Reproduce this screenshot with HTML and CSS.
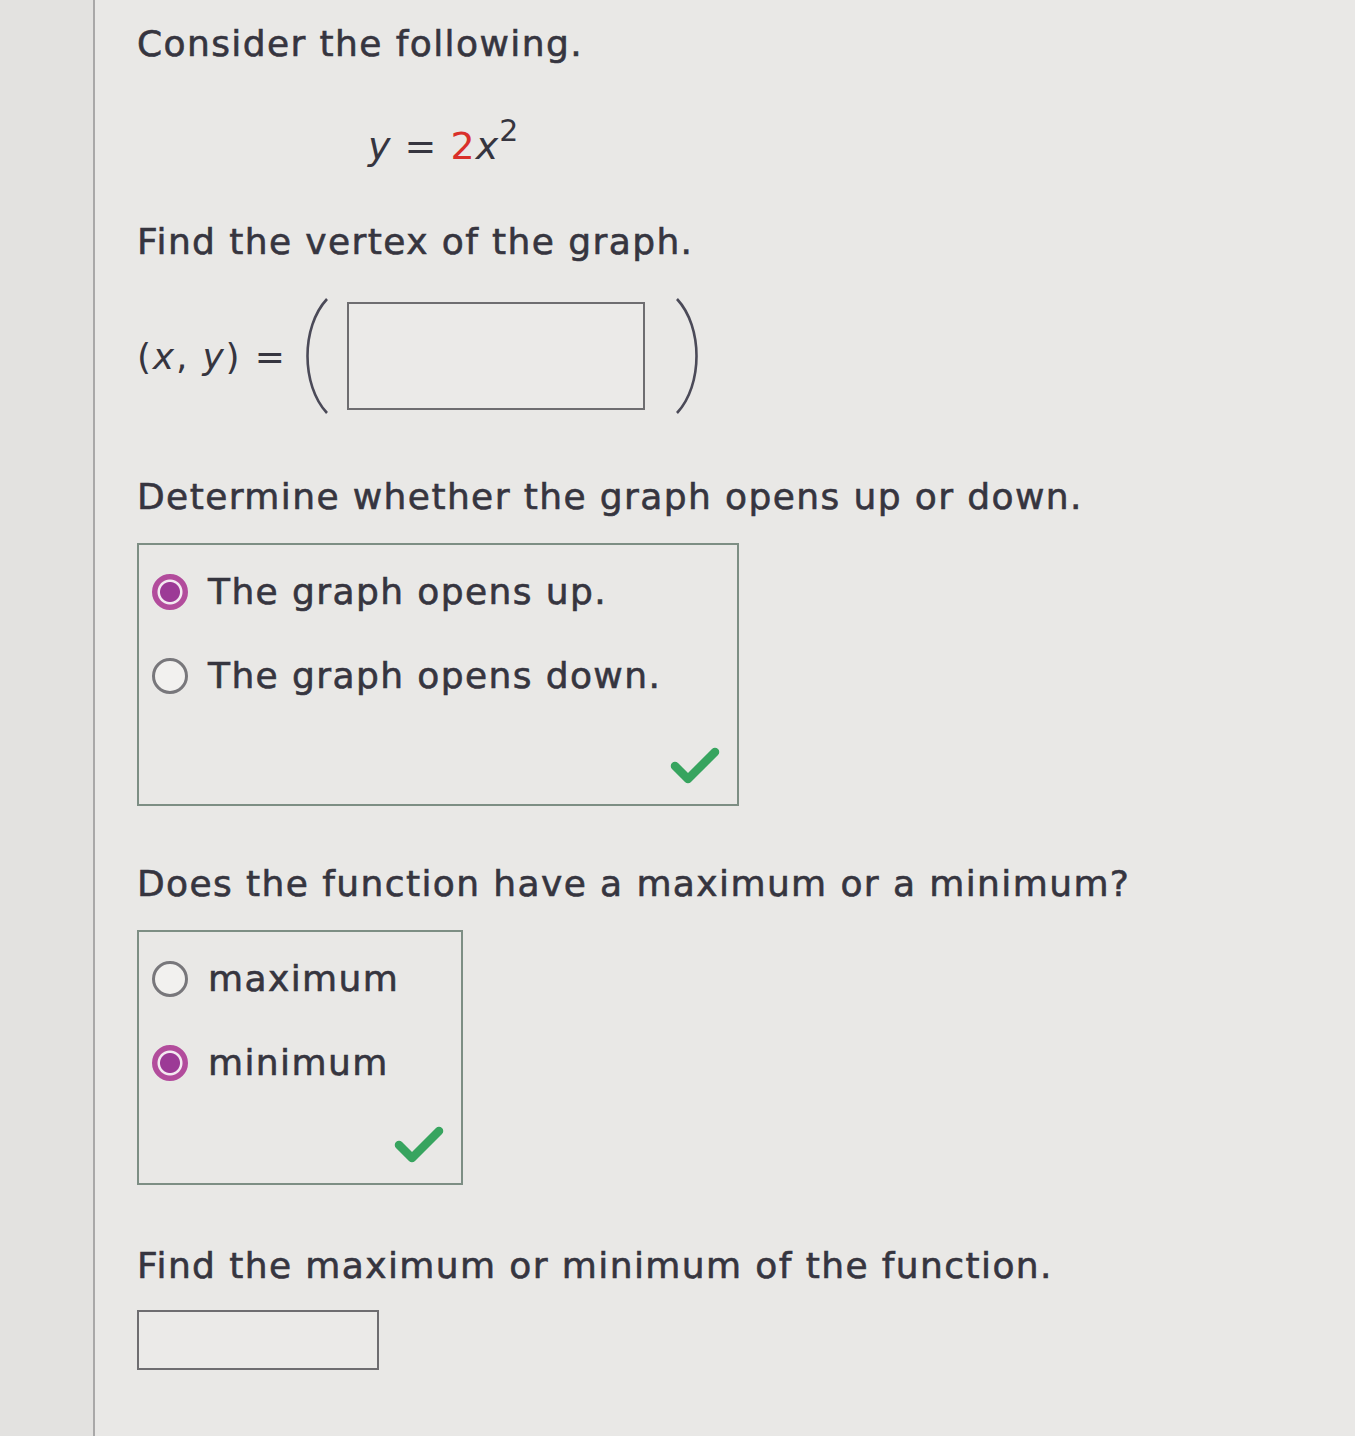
FILE: index.html
```html
<!DOCTYPE html>
<html>
<head>
<meta charset="utf-8">
<link rel="stylesheet" href="styles.css">
</head>
<body>
<div class="page">
  <div class="sidebar"></div>
  <div class="content">
    <p class="q q1">Consider the following.</p>
    <div class="eq"><span class="it">y</span> = <span class="red">2</span><span class="it">x</span><sup>2</sup></div>
    <p class="q q2">Find the vertex of the graph.</p>
    <div class="vertex">
      <span class="xy">(<span class="it">x</span>, <span class="it">y</span>) =</span>
      <svg class="paren lp" width="28" height="118" viewBox="0 0 28 118"><path d="M24 2 C-2 30 -2 88 24 116" fill="none" stroke="#4b4a58" stroke-width="2.6"/></svg>
      <span class="field big"></span>
      <svg class="paren rp" width="28" height="118" viewBox="0 0 28 118"><path d="M4 2 C30 30 30 88 4 116" fill="none" stroke="#4b4a58" stroke-width="2.6"/></svg>
    </div>
    <p class="q q3">Determine whether the graph opens up or down.</p>
    <div class="choices c1">
      <div class="opt"><span class="radio on"></span><span>The graph opens up.</span></div>
      <div class="opt"><span class="radio"></span><span>The graph opens down.</span></div>
      <div class="mark">
        <svg width="50" height="38" viewBox="0 0 50 38"><path d="M5 19 L18 32 L45 5" fill="none" stroke="#37a45f" stroke-width="8.5" stroke-linecap="round" stroke-linejoin="round"/></svg>
      </div>
    </div>
    <p class="q q4">Does the function have a maximum or a minimum?</p>
    <div class="choices c2">
      <div class="opt"><span class="radio"></span><span>maximum</span></div>
      <div class="opt"><span class="radio on"></span><span>minimum</span></div>
      <div class="mark">
        <svg width="50" height="38" viewBox="0 0 50 38"><path d="M5 19 L18 32 L45 5" fill="none" stroke="#37a45f" stroke-width="8.5" stroke-linecap="round" stroke-linejoin="round"/></svg>
      </div>
    </div>
    <p class="q q5">Find the maximum or minimum of the function.</p>
    <div class="field small"></div>
  </div>
</div>
</body>
</html>
```

FILE: styles.css
```css
html, body { margin: 0; padding: 0; }
body {
  background: #e9e8e6;
  font-family: "DejaVu Sans", Verdana, sans-serif;
  color: #36353f;
}
.page { display: flex; min-height: 1436px; }
.sidebar {
  width: 93px;
  background: #e3e2e0;
  border-right: 2px solid #a9a8a8;
  flex: none;
}
.content { padding-left: 42px; flex: 1; }
.q {
  margin: 0;
  font-size: 36px;
  line-height: 44px;
  letter-spacing: 1.4px;
  -webkit-text-stroke: 0.6px #36353f;
}
.q1 { margin-top: 22px; }
.eq {
  margin-top: 60px;
  margin-left: 231px;
  font-size: 38px;
  line-height: 40px;
  letter-spacing: 1px;
}
.eq sup { font-size: 30px; vertical-align: 18px; line-height: 0; }
.it { font-style: italic; }
.red { color: #d9302a; }
.q2 { margin-top: 54px; }
.vertex {
  margin-top: 33px;
  display: flex;
  align-items: center;
  height: 118px;
}
.xy { font-size: 36px; letter-spacing: 1.8px; margin-right: 16px; }
.paren { display: block; flex: none; }
.field {
  display: block;
  border: 2px solid #6e6d70;
  background: #ebeae8;
  box-sizing: border-box;
}
.field.big { width: 298px; height: 108px; margin: 0 28px 0 16px; }
.q3 { margin-top: 60px; }
.choices {
  border: 2px solid #7d8e84;
  box-sizing: border-box;
  padding: 25px 0 0 13px;
  margin-top: 24px;
  display: flex;
  flex-direction: column;
  gap: 40px;
}
.c1 { width: 602px; height: 263px; }
.c2 { width: 326px; height: 255px; }
.opt {
  display: flex;
  align-items: center;
  gap: 20px;
  font-size: 36px;
  line-height: 44px;
  letter-spacing: 1.4px;
  -webkit-text-stroke: 0.6px #36353f;
}
.radio {
  width: 36px; height: 36px;
  border-radius: 50%;
  border: 3px solid #78777b;
  box-sizing: border-box;
  background: #f2f1ef;
  flex: none;
}
.radio.on {
  border-color: #b24c9c;
  background: radial-gradient(circle, #9c3a96 0 9.5px, #f3e9f1 10.5px 12px, #b24c9c 13px);
}
.mark { align-self: flex-end; margin: auto 17px 19px 0; }
.mark svg { display: block; }
.q4 { margin-top: 56px; }
.q5 { margin-top: 59px; }
.field.small { width: 242px; height: 60px; margin-top: 22px; }
```
